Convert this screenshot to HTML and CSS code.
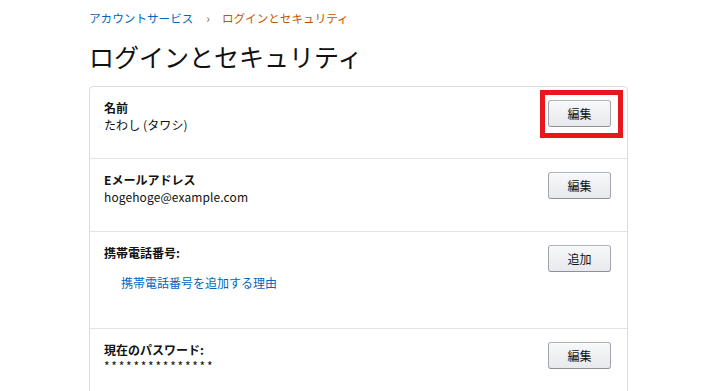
FILE: index.html
```html
<!DOCTYPE html>
<html lang="ja">
<head>
<meta charset="utf-8">
<title>ログインとセキュリティ</title>
<link rel="stylesheet" href="styles.css">
</head>
<body>
<div class="page">
  <nav class="breadcrumb">
    <a class="crumb-link" href="#">アカウントサービス</a>
    <span class="crumb-sep">›</span>
    <span class="crumb-current">ログインとセキュリティ</span>
  </nav>
  <h1 class="title">ログインとセキュリティ</h1>
  <div class="card">
    <div class="row">
      <div class="info">
        <div class="label">名前</div>
        <div class="value">たわし (タワシ)</div>
      </div>
      <div class="action">
        <button class="btn">編集</button>
        <span class="highlight"></span>
      </div>
    </div>
    <div class="row">
      <div class="info">
        <div class="label">Eメールアドレス</div>
        <div class="value">hogehoge@example.com</div>
      </div>
      <div class="action">
        <button class="btn">編集</button>
      </div>
    </div>
    <div class="row">
      <div class="info">
        <div class="label">携帯電話番号:</div>
        <a class="reason" href="#">携帯電話番号を追加する理由</a>
      </div>
      <div class="action">
        <button class="btn">追加</button>
      </div>
    </div>
    <div class="row">
      <div class="info">
        <div class="label">現在のパスワード:</div>
        <div class="value password">***************</div>
      </div>
      <div class="action">
        <button class="btn">編集</button>
      </div>
    </div>
  </div>
</div>
</body>
</html>
```

FILE: styles.css
```css
html, body {
  margin: 0;
  padding: 0;
  background: #ffffff;
}

body {
  font-family: "Noto Sans CJK JP", "Liberation Sans", sans-serif;
  color: #111111;
  font-size: 12px;
  line-height: 17px;
}

.page {
  width: 539px;
  padding: 10px 0 0 89px;
}

.breadcrumb {
  display: flex;
  align-items: center;
  height: 17px;
  font-size: 11.6px;
}

.crumb-link {
  color: #0066c0;
  text-decoration: none;
}

.crumb-sep {
  color: #555555;
  margin: 0 12px 0 13px;
}

.crumb-current {
  color: #c45500;
}

.title {
  font-size: 25px;
  font-weight: 400;
  line-height: 34px;
  margin: 12px 0 13px;
  color: #111111;
}

.card {
  border: 1px solid #dddddd;
  border-radius: 4px;
}

.row {
  display: flex;
  justify-content: space-between;
  align-items: flex-start;
  padding: 12px 16px 25px 14px;
  border-top: 1px solid #e3e3e3;
}

.row:first-child {
  border-top: none;
}

.row:nth-child(2) {
  padding-bottom: 26px;
}

.label {
  font-weight: 700;
}

.value {
  color: #111111;
  letter-spacing: 0.1px;
}

.password {
  font-size: 12px;
  letter-spacing: 1.75px;
  line-height: 15px;
}

.reason {
  display: block;
  color: #0066c0;
  text-decoration: none;
  margin: 13px 0 12px 17px;
}

.action {
  position: relative;
  padding-top: 1px;
}

.btn {
  display: block;
  width: 63px;
  height: 27px;
  padding: 0;
  font-family: "Noto Sans CJK JP", "Liberation Sans", sans-serif;
  font-size: 12px;
  color: #111111;
  border: 1px solid #adb1b8;
  border-color: #adb1b8 #a2a6ac #8d9096;
  border-radius: 3px;
  background: linear-gradient(to bottom, #f7f8fa, #e7e9ec);
  box-shadow: inset 0 1px 0 rgba(255, 255, 255, 0.6);
}

.highlight {
  position: absolute;
  left: -8px;
  top: -9px;
  width: 83px;
  height: 48px;
  border: 5px solid #e8171f;
  box-sizing: border-box;
}
```
